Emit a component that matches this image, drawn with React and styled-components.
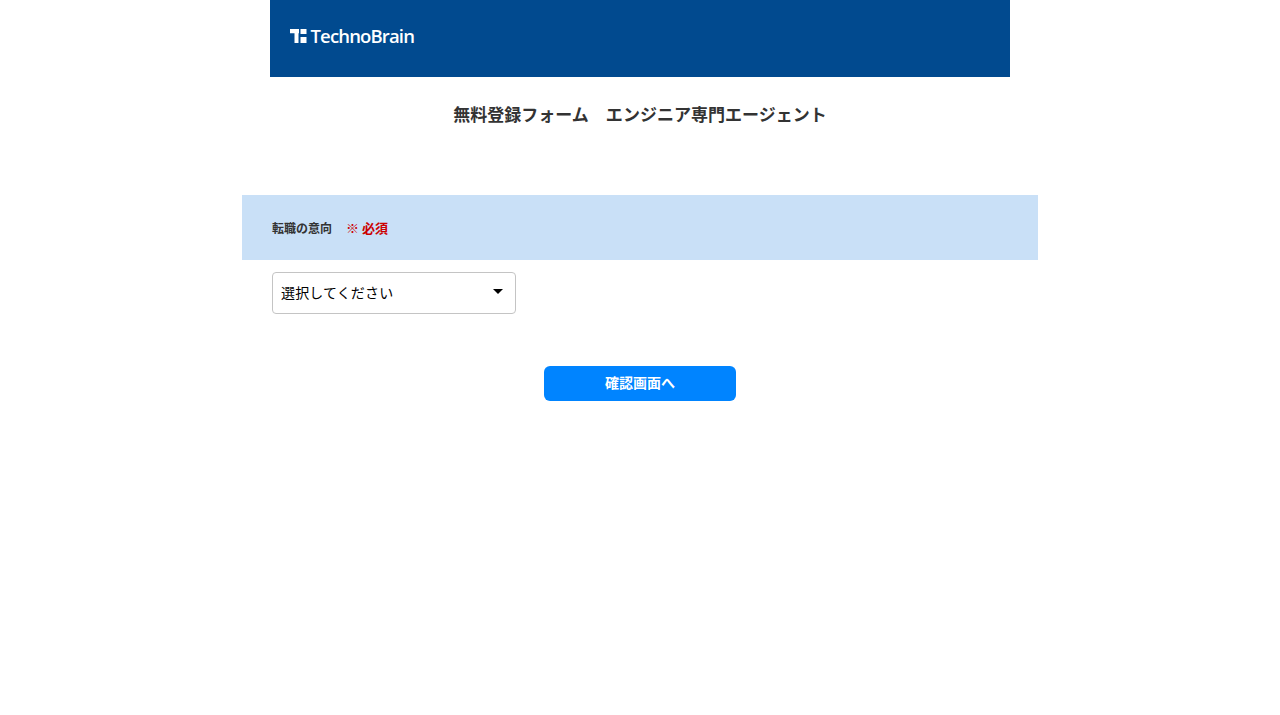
import React from 'react'
import styled, { createGlobalStyle } from 'styled-components'

const GlobalStyle = createGlobalStyle`
    html, body {
        margin: 0;
        padding: 0;
        background: #fff;
        font-family: "Noto Sans CJK JP", "Noto Sans", sans-serif;
    }
`

const Logo = () => (
    <LogoWrap>
        <svg width="17" height="15" viewBox="0 0 17 15">
            <path d="M0 1h9v4.200H8.500V15H4.500V5.200H0z M10.500 1H16.500v5h-6z M10.500 9H16.500v6h-6z" fill="#fff" />
        </svg>
        <LogoText>TechnoBrain</LogoText>
    </LogoWrap>
)

export default function App() {
    return (
        <Page>
            <GlobalStyle />
            <Header>
                <Logo />
            </Header>
            <Title>無料登録フォーム　エンジニア専門エージェント</Title>
            <Form>
                <Question>
                    <QuestionLabel>転職の意向</QuestionLabel>
                    <Required>※ 必須</Required>
                </Question>
                <Answer>
                    <SelectBox>
                        <SelectText>選択してください</SelectText>
                        <Caret />
                    </SelectBox>
                </Answer>
                <Actions>
                    <Submit type="button">確認画面へ</Submit>
                </Actions>
            </Form>
        </Page>
    )
}

const Page = styled.div`
    width: 1280px;
    height: 715px;
    display: flex;
    flex-direction: column;
    align-items: center;
    overflow: hidden;
`
const Header = styled.header`
    width: 740px;
    height: 77px;
    box-sizing: border-box;
    background-color: #014a8f;
    padding: 25px 0 0 20px;
`
const LogoWrap = styled.div`
    display: flex;
    align-items: center;
    gap: 3.500px;
    height: 20px;
`
const LogoText = styled.span`
    font-family: "Open Sans", "Noto Sans", sans-serif;
    font-size: 18.500px;
    font-weight: 600;
    letter-spacing: -0.85px;
    color: #fff;
`
const Title = styled.h1`
    margin: 0;
    padding-top: 24px;
    height: 118px;
    box-sizing: border-box;
    font-size: 17px;
    line-height: 25px;
    font-weight: 700;
    letter-spacing: 0.02px;
    color: #333;
    text-align: center;
`
const Form = styled.form`
    width: 796px;
`
const Question = styled.div`
    height: 65px;
    box-sizing: border-box;
    background-color: #c9e0f7;
    padding: 24px 30px 0;
    display: flex;
    gap: 14px;
    font-size: 12px;
    line-height: 18px;
    font-weight: 700;
`
const QuestionLabel = styled.span`
    color: #333;
`
const Required = styled.span`
    color: #cc0000;
    font-size: 13px;
`
const Answer = styled.div`
    padding: 12px 30px 0;
`
const SelectBox = styled.div`
    width: 244px;
    height: 42px;
    box-sizing: border-box;
    border: 1px solid #c4c4c4;
    border-radius: 4px;
    padding: 0 12px 0 8px;
    display: flex;
    align-items: center;
    justify-content: space-between;
    font-size: 14px;
    color: #000;
`
const SelectText = styled.span`
    margin-bottom: 2px;
    letter-spacing: 0.01em;
`
const Caret = styled.i`
    width: 0;
    height: 0;
    margin-bottom: 4px;
    border-left: 5px solid transparent;
    border-right: 5px solid transparent;
    border-top: 5px solid #000;
`
const Actions = styled.div`
    display: flex;
    justify-content: center;
    padding-top: 52px;
`
const Submit = styled.button`
    width: 192px;
    height: 35px;
    padding: 0 0 3px;
    border: none;
    border-radius: 6px;
    background-color: #0084ff;
    color: #fff;
    font-family: inherit;
    font-size: 14px;
    font-weight: 700;
`
